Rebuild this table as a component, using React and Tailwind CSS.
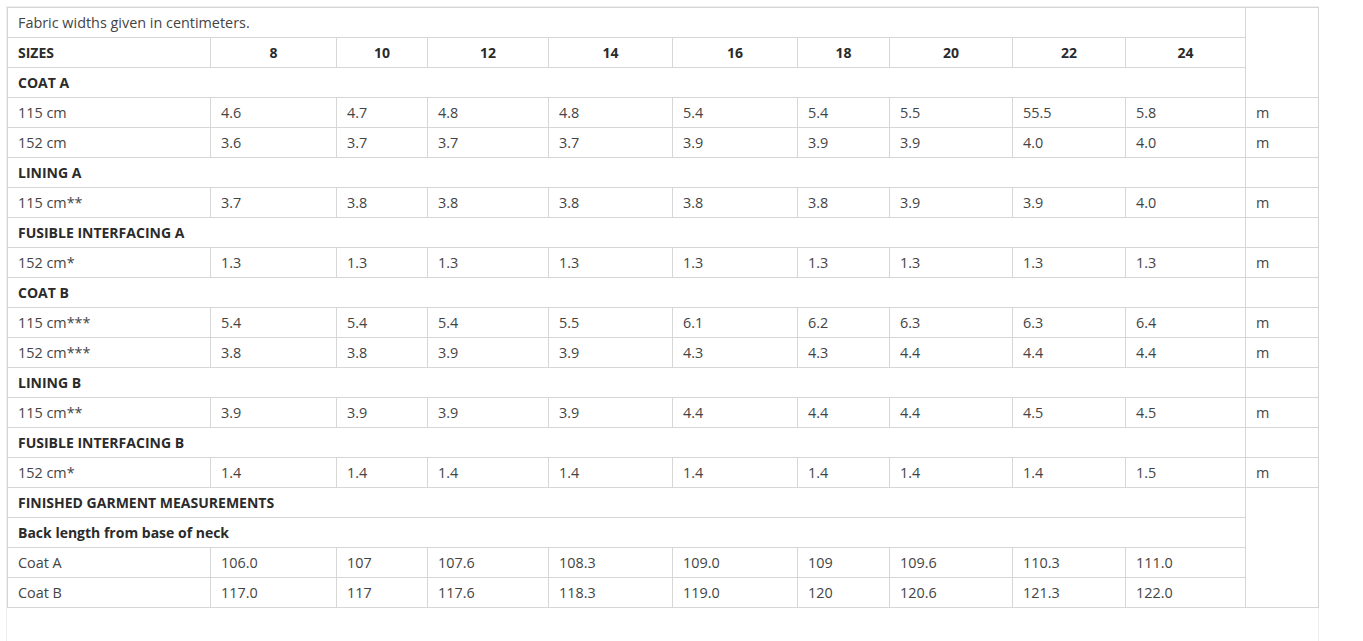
import React from "react";

const widths = [203, 126, 91, 121, 124, 125, 92, 123, 113, 120, 73];
const sizes = ["8", "10", "12", "14", "16", "18", "20", "22", "24"];

const rows = [
  { type: "section", label: "COAT A", side: "skip" },
  { type: "data", label: "115 cm", vals: ["4.6", "4.7", "4.8", "4.8", "5.4", "5.4", "5.5", "55.5", "5.8"], unit: "m" },
  { type: "data", label: "152 cm", vals: ["3.6", "3.7", "3.7", "3.7", "3.9", "3.9", "3.9", "4.0", "4.0"], unit: "m" },
  { type: "section", label: "LINING A" },
  { type: "data", label: "115 cm**", vals: ["3.7", "3.8", "3.8", "3.8", "3.8", "3.8", "3.9", "3.9", "4.0"], unit: "m" },
  { type: "section", label: "FUSIBLE INTERFACING A" },
  { type: "data", label: "152 cm*", vals: ["1.3", "1.3", "1.3", "1.3", "1.3", "1.3", "1.3", "1.3", "1.3"], unit: "m" },
  { type: "section", label: "COAT B" },
  { type: "data", label: "115 cm***", vals: ["5.4", "5.4", "5.4", "5.5", "6.1", "6.2", "6.3", "6.3", "6.4"], unit: "m" },
  { type: "data", label: "152 cm***", vals: ["3.8", "3.8", "3.9", "3.9", "4.3", "4.3", "4.4", "4.4", "4.4"], unit: "m" },
  { type: "section", label: "LINING B" },
  { type: "data", label: "115 cm**", vals: ["3.9", "3.9", "3.9", "3.9", "4.4", "4.4", "4.4", "4.5", "4.5"], unit: "m" },
  { type: "section", label: "FUSIBLE INTERFACING B" },
  { type: "data", label: "152 cm*", vals: ["1.4", "1.4", "1.4", "1.4", "1.4", "1.4", "1.4", "1.4", "1.5"], unit: "m" },
  { type: "section", label: "FINISHED GARMENT MEASUREMENTS", side: "span4" },
  { type: "section", label: "Back length from base of neck", side: "skip" },
  { type: "data", label: "Coat A", vals: ["106.0", "107", "107.6", "108.3", "109.0", "109", "109.6", "110.3", "111.0"], unit: null },
  { type: "data", label: "Coat B", vals: ["117.0", "117", "117.6", "118.3", "119.0", "120", "120.6", "121.3", "122.0"], unit: null },
];

const cell = "border border-[#d6d6d6] h-[30px] py-0 px-[10px] align-middle";

export default function App() {
  return (
    <div
      className="h-[641px] overflow-hidden bg-white pt-[6px] pl-[6px]"
      style={{ fontFamily: '"Open Sans", "Liberation Sans", sans-serif' }}
    >
      <div className="w-[1313px] h-[635px] border-l border-r border-t border-[#eeeeee]">
        <table className="table-fixed border-collapse w-[1311px] text-[14.4px] text-[#444444]">
          <colgroup>
            {widths.map((w, i) => (
              <col key={i} style={{ width: w }} />
            ))}
          </colgroup>
          <tbody>
            <tr>
              <td colSpan={10} className={`${cell} text-[#444444]`}>
                Fabric widths given in centimeters.
              </td>
              <td rowSpan={3} className={cell}></td>
            </tr>
            <tr>
              <td className={`${cell} font-bold text-[14px] text-[#2b2b2b]`}>SIZES</td>
              {sizes.map((s) => (
                <td key={s} className={`${cell} font-bold text-[14px] text-[#2b2b2b] text-center`}>
                  {s}
                </td>
              ))}
            </tr>
            {rows.map((r, i) => {
              if (r.type === "section") {
                return (
                  <tr key={i}>
                    <td colSpan={10} className={`${cell} font-bold text-[14px] text-[#2b2b2b]`}>
                      {r.label}
                    </td>
                    {r.side === "skip" ? null : r.side === "span4" ? (
                      <td rowSpan={4} className={cell}></td>
                    ) : (
                      <td className={cell}></td>
                    )}
                  </tr>
                );
              }
              return (
                <tr key={i}>
                  <td className={cell}>{r.label}</td>
                  {r.vals.map((v, j) => (
                    <td key={j} className={cell}>
                      {v}
                    </td>
                  ))}
                  {r.unit ? <td className={`${cell} pt-[1px]`}>{r.unit}</td> : null}
                </tr>
              );
            })}
          </tbody>
        </table>
      </div>
    </div>
  );
}
